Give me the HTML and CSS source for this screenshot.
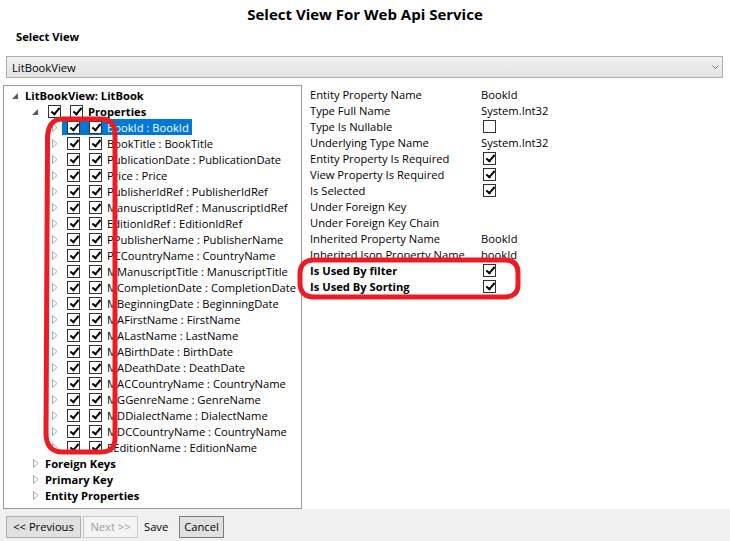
FILE: index.html
```html
<!DOCTYPE html>
<html>
<head>
<meta charset="utf-8">
<title>Select View For Web Api Service</title>
<link rel="stylesheet" href="styles.css">
</head>
<body>
<div class="window">
  <div class="title">Select View For Web Api Service</div>
  <div class="section-label">Select View</div>
  <div class="combo">
    <span class="combo-text">LitBookView</span>
    <svg class="chev" width="7" height="5" viewBox="0 0 7 5"><polyline points="0.5,0.5 3.5,3.5 6.5,0.5" fill="none" stroke="#707070" stroke-width="1"/></svg>
  </div>
  <div class="main">
    <div class="tree">
      <div class="row lv0"><span class="tog"><span class="tri-open"></span></span><span class="hdr"><span class="txt bold">LitBookView: LitBook</span></span></div>
      <div class="row lv1"><span class="tog"><span class="tri-open"></span></span><span class="hdr"><span class="cb on"></span><span class="cb on"></span><span class="txt bold">Properties</span></span></div>
      <div class="row lv2 sel"><span class="tog"><svg class="tri-closed" width="6" height="9" viewBox="0 0 6 9"><path d="M0.5,0.5 L5,4.5 L0.5,8.5 Z"/></svg></span><span class="hdr"><span class="cb on"></span><span class="cb on"></span><span class="txt">BookId : BookId</span></span></div>
      <div class="row lv2"><span class="tog"><svg class="tri-closed" width="6" height="9" viewBox="0 0 6 9"><path d="M0.5,0.5 L5,4.5 L0.5,8.5 Z"/></svg></span><span class="hdr"><span class="cb on"></span><span class="cb on"></span><span class="txt">BookTitle : BookTitle</span></span></div>
      <div class="row lv2"><span class="tog"><svg class="tri-closed" width="6" height="9" viewBox="0 0 6 9"><path d="M0.5,0.5 L5,4.5 L0.5,8.5 Z"/></svg></span><span class="hdr"><span class="cb on"></span><span class="cb on"></span><span class="txt">PublicationDate : PublicationDate</span></span></div>
      <div class="row lv2"><span class="tog"><svg class="tri-closed" width="6" height="9" viewBox="0 0 6 9"><path d="M0.5,0.5 L5,4.5 L0.5,8.5 Z"/></svg></span><span class="hdr"><span class="cb on"></span><span class="cb on"></span><span class="txt">Price : Price</span></span></div>
      <div class="row lv2"><span class="tog"><svg class="tri-closed" width="6" height="9" viewBox="0 0 6 9"><path d="M0.5,0.5 L5,4.5 L0.5,8.5 Z"/></svg></span><span class="hdr"><span class="cb on"></span><span class="cb on"></span><span class="txt">PublisherIdRef : PublisherIdRef</span></span></div>
      <div class="row lv2"><span class="tog"><svg class="tri-closed" width="6" height="9" viewBox="0 0 6 9"><path d="M0.5,0.5 L5,4.5 L0.5,8.5 Z"/></svg></span><span class="hdr"><span class="cb on"></span><span class="cb on"></span><span class="txt">ManuscriptIdRef : ManuscriptIdRef</span></span></div>
      <div class="row lv2"><span class="tog"><svg class="tri-closed" width="6" height="9" viewBox="0 0 6 9"><path d="M0.5,0.5 L5,4.5 L0.5,8.5 Z"/></svg></span><span class="hdr"><span class="cb on"></span><span class="cb on"></span><span class="txt">EditionIdRef : EditionIdRef</span></span></div>
      <div class="row lv2"><span class="tog"><svg class="tri-closed" width="6" height="9" viewBox="0 0 6 9"><path d="M0.5,0.5 L5,4.5 L0.5,8.5 Z"/></svg></span><span class="hdr"><span class="cb on"></span><span class="cb on"></span><span class="txt">PPublisherName : PublisherName</span></span></div>
      <div class="row lv2"><span class="tog"><svg class="tri-closed" width="6" height="9" viewBox="0 0 6 9"><path d="M0.5,0.5 L5,4.5 L0.5,8.5 Z"/></svg></span><span class="hdr"><span class="cb on"></span><span class="cb on"></span><span class="txt">PCCountryName : CountryName</span></span></div>
      <div class="row lv2"><span class="tog"><svg class="tri-closed" width="6" height="9" viewBox="0 0 6 9"><path d="M0.5,0.5 L5,4.5 L0.5,8.5 Z"/></svg></span><span class="hdr"><span class="cb on"></span><span class="cb on"></span><span class="txt">MManuscriptTitle : ManuscriptTitle</span></span></div>
      <div class="row lv2"><span class="tog"><svg class="tri-closed" width="6" height="9" viewBox="0 0 6 9"><path d="M0.5,0.5 L5,4.5 L0.5,8.5 Z"/></svg></span><span class="hdr"><span class="cb on"></span><span class="cb on"></span><span class="txt">MCompletionDate : CompletionDate</span></span></div>
      <div class="row lv2"><span class="tog"><svg class="tri-closed" width="6" height="9" viewBox="0 0 6 9"><path d="M0.5,0.5 L5,4.5 L0.5,8.5 Z"/></svg></span><span class="hdr"><span class="cb on"></span><span class="cb on"></span><span class="txt">MBeginningDate : BeginningDate</span></span></div>
      <div class="row lv2"><span class="tog"><svg class="tri-closed" width="6" height="9" viewBox="0 0 6 9"><path d="M0.5,0.5 L5,4.5 L0.5,8.5 Z"/></svg></span><span class="hdr"><span class="cb on"></span><span class="cb on"></span><span class="txt">MAFirstName : FirstName</span></span></div>
      <div class="row lv2"><span class="tog"><svg class="tri-closed" width="6" height="9" viewBox="0 0 6 9"><path d="M0.5,0.5 L5,4.5 L0.5,8.5 Z"/></svg></span><span class="hdr"><span class="cb on"></span><span class="cb on"></span><span class="txt">MALastName : LastName</span></span></div>
      <div class="row lv2"><span class="tog"><svg class="tri-closed" width="6" height="9" viewBox="0 0 6 9"><path d="M0.5,0.5 L5,4.5 L0.5,8.5 Z"/></svg></span><span class="hdr"><span class="cb on"></span><span class="cb on"></span><span class="txt">MABirthDate : BirthDate</span></span></div>
      <div class="row lv2"><span class="tog"><svg class="tri-closed" width="6" height="9" viewBox="0 0 6 9"><path d="M0.5,0.5 L5,4.5 L0.5,8.5 Z"/></svg></span><span class="hdr"><span class="cb on"></span><span class="cb on"></span><span class="txt">MADeathDate : DeathDate</span></span></div>
      <div class="row lv2"><span class="tog"><svg class="tri-closed" width="6" height="9" viewBox="0 0 6 9"><path d="M0.5,0.5 L5,4.5 L0.5,8.5 Z"/></svg></span><span class="hdr"><span class="cb on"></span><span class="cb on"></span><span class="txt">MACCountryName : CountryName</span></span></div>
      <div class="row lv2"><span class="tog"><svg class="tri-closed" width="6" height="9" viewBox="0 0 6 9"><path d="M0.5,0.5 L5,4.5 L0.5,8.5 Z"/></svg></span><span class="hdr"><span class="cb on"></span><span class="cb on"></span><span class="txt">MGGenreName : GenreName</span></span></div>
      <div class="row lv2"><span class="tog"><svg class="tri-closed" width="6" height="9" viewBox="0 0 6 9"><path d="M0.5,0.5 L5,4.5 L0.5,8.5 Z"/></svg></span><span class="hdr"><span class="cb on"></span><span class="cb on"></span><span class="txt">MDDialectName : DialectName</span></span></div>
      <div class="row lv2"><span class="tog"><svg class="tri-closed" width="6" height="9" viewBox="0 0 6 9"><path d="M0.5,0.5 L5,4.5 L0.5,8.5 Z"/></svg></span><span class="hdr"><span class="cb on"></span><span class="cb on"></span><span class="txt">MDCCountryName : CountryName</span></span></div>
      <div class="row lv2"><span class="tog"><svg class="tri-closed" width="6" height="9" viewBox="0 0 6 9"><path d="M0.5,0.5 L5,4.5 L0.5,8.5 Z"/></svg></span><span class="hdr"><span class="cb on"></span><span class="cb on"></span><span class="txt">EEditionName : EditionName</span></span></div>
      <div class="row lv1"><span class="tog"><svg class="tri-closed" width="6" height="9" viewBox="0 0 6 9"><path d="M0.5,0.5 L5,4.5 L0.5,8.5 Z"/></svg></span><span class="hdr"><span class="txt bold">Foreign Keys</span></span></div>
      <div class="row lv1"><span class="tog"><svg class="tri-closed" width="6" height="9" viewBox="0 0 6 9"><path d="M0.5,0.5 L5,4.5 L0.5,8.5 Z"/></svg></span><span class="hdr"><span class="txt bold">Primary Key</span></span></div>
      <div class="row lv1"><span class="tog"><svg class="tri-closed" width="6" height="9" viewBox="0 0 6 9"><path d="M0.5,0.5 L5,4.5 L0.5,8.5 Z"/></svg></span><span class="hdr"><span class="txt bold">Entity Properties</span></span></div>
    </div>
    <div class="props">
      <div class="prow"><span class="plabel">Entity Property Name</span><span class="pval">BookId</span></div>
      <div class="prow"><span class="plabel">Type Full Name</span><span class="pval">System.Int32</span></div>
      <div class="prow"><span class="plabel">Type Is Nullable</span><span class="pval"><span class="cb"></span></span></div>
      <div class="prow"><span class="plabel">Underlying Type Name</span><span class="pval">System.Int32</span></div>
      <div class="prow"><span class="plabel">Entity Property Is Required</span><span class="pval"><span class="cb on"></span></span></div>
      <div class="prow"><span class="plabel">View Property Is Required</span><span class="pval"><span class="cb on"></span></span></div>
      <div class="prow"><span class="plabel">Is Selected</span><span class="pval"><span class="cb on"></span></span></div>
      <div class="prow"><span class="plabel">Under Foreign Key</span><span class="pval"></span></div>
      <div class="prow"><span class="plabel">Under Foreign Key Chain</span><span class="pval"></span></div>
      <div class="prow"><span class="plabel">Inherited Property Name</span><span class="pval">BookId</span></div>
      <div class="prow"><span class="plabel">Inherited Json Property Name</span><span class="pval">bookId</span></div>
      <div class="prow"><span class="plabel bold">Is Used By filter</span><span class="pval"><span class="cb on"></span></span></div>
      <div class="prow"><span class="plabel bold">Is Used By Sorting</span><span class="pval"><span class="cb on"></span></span></div>
    </div>
  </div>
  <div class="footer">
    <span class="btn btn-prev">&lt;&lt; Previous</span>
    <span class="btn btn-next disabled">Next &gt;&gt;</span>
    <span class="btn btn-save flat">Save</span>
    <span class="btn btn-cancel default">Cancel</span>
  </div>
  <svg class="annot" width="730" height="541" viewBox="0 0 730 541">
    <path d="M47.5,142 C47,126 52,119 63,119 L101,119 C110,119 115,124 115,134 L115,438 C115,448 110,452 100,452 L62,452 C52,452 46,446 46,433 Z" fill="none" stroke="#ed1c24" stroke-width="5"/>
    <path d="M314,260 L505,260 C514,260 518,265 518,273 L518,285 C518,293 513,297 505,297 L314,297 C305,297 300,292 300,283 L300,274 C300,265 305,260 314,260 Z" fill="none" stroke="#ed1c24" stroke-width="5"/>
  </svg>
</div>
</body>
</html>
```

FILE: styles.css
```css
* { box-sizing: border-box; margin: 0; padding: 0; }
html, body { width: 730px; height: 541px; overflow: hidden; background: #fff; }
body {
  font-family: "Open Sans", "Noto Sans", sans-serif;
  font-size: 11.2px;
  color: #000;
}
.bold { font-weight: 700; }

.window {
  position: relative;
  width: 730px;
  height: 541px;
  display: flex;
  flex-direction: column;
}

.title {
  height: 28px;
  line-height: 28px;
  text-align: center;
  font-weight: 700;
  font-size: 15px;
}

.section-label {
  height: 18px;
  line-height: 18px;
  padding-left: 16px;
  font-weight: 700;
}

.combo {
  margin: 10px 7px 0 6px;
  height: 22px;
  border: 1px solid #acacac;
  background: linear-gradient(#f0f0f0, #e5e5e5);
  display: flex;
  align-items: center;
  padding-left: 5px;
}
.combo-text { flex: 1; }
.chev { margin-right: 3px; }

.main {
  display: flex;
  margin-top: 7px;
  height: 424px;
}

.tree {
  margin-left: 3px;
  width: 299px;
  flex: none;
  border: 1px solid #9a9a9a;
  padding-top: 1px;
  overflow: hidden;
}

.row {
  height: 16px;
  display: flex;
  align-items: center;
  white-space: nowrap;
}
.tog {
  width: 16px;
  height: 16px;
  flex: none;
  display: flex;
  align-items: center;
  padding-left: 6px;
}
.lv0 .tog { margin-left: 2px; }
.lv1 .tog { margin-left: 22px; }
.lv2 .tog { margin-left: 42px; }

.tri-open {
  width: 0;
  height: 0;
  border-left: 6px solid transparent;
  border-bottom: 6px solid #595959;
  margin-top: 1px;
}
.tri-closed path { fill: none; stroke: #a6a6a6; stroke-width: 1; }
.lv1 .tri-closed { margin-left: 1px; }

.hdr {
  display: flex;
  align-items: center;
  height: 16px;
  padding: 0 3px;
}
.sel .hdr { background: #0078d7; color: #fff; }

.cb {
  width: 13px;
  height: 13px;
  border: 1px solid #333;
  background: #fff;
  flex: none;
  position: relative;
  display: inline-block;
}
.cb.on::after {
  content: "";
  position: absolute;
  left: 3.5px;
  top: 0.5px;
  width: 3px;
  height: 7px;
  border: solid #000;
  border-width: 0 2px 2px 0;
  transform: rotate(40deg);
}
.hdr .cb:first-child { margin-left: 2px; }
.lv1 .hdr .cb:first-child { margin-left: 3px; }
.hdr .cb + .cb { margin-left: 9px; }
.hdr .cb + .txt { margin-left: 5px; }

.props {
  margin-left: 8px;
  padding-top: 1px;
  flex: 1;
}
.prow {
  display: flex;
  align-items: center;
  height: 16px;
  white-space: nowrap;
}
.plabel { width: 171px; flex: none; }
.pval { display: flex; align-items: center; }
.pval .cb { margin-left: 2px; }

.footer {
  margin-top: auto;
  height: 32px;
  background: #f0f0f0;
  display: flex;
  align-items: flex-start;
  padding: 7px 0 0 6px;
}
.btn {
  height: 22px;
  line-height: 20px;
  border: 1px solid #adadad;
  background: #e1e1e1;
  text-align: center;
  flex: none;
}
.btn-prev { width: 75px; }
.btn-next { width: 55px; margin-left: 2px; }
.btn-save { width: 39px; margin-left: 2px; text-align: left; padding-left: 3px; }
.btn-cancel { width: 45px; margin-left: 0; }
.disabled { color: #a0a0a0; border-color: #c8c8c8; background: #f4f4f4; }
.flat { border-color: transparent; background: transparent; }
.default { border-color: #7a7a7a; }

.annot {
  position: absolute;
  left: 0;
  top: 0;
  pointer-events: none;
}
```
